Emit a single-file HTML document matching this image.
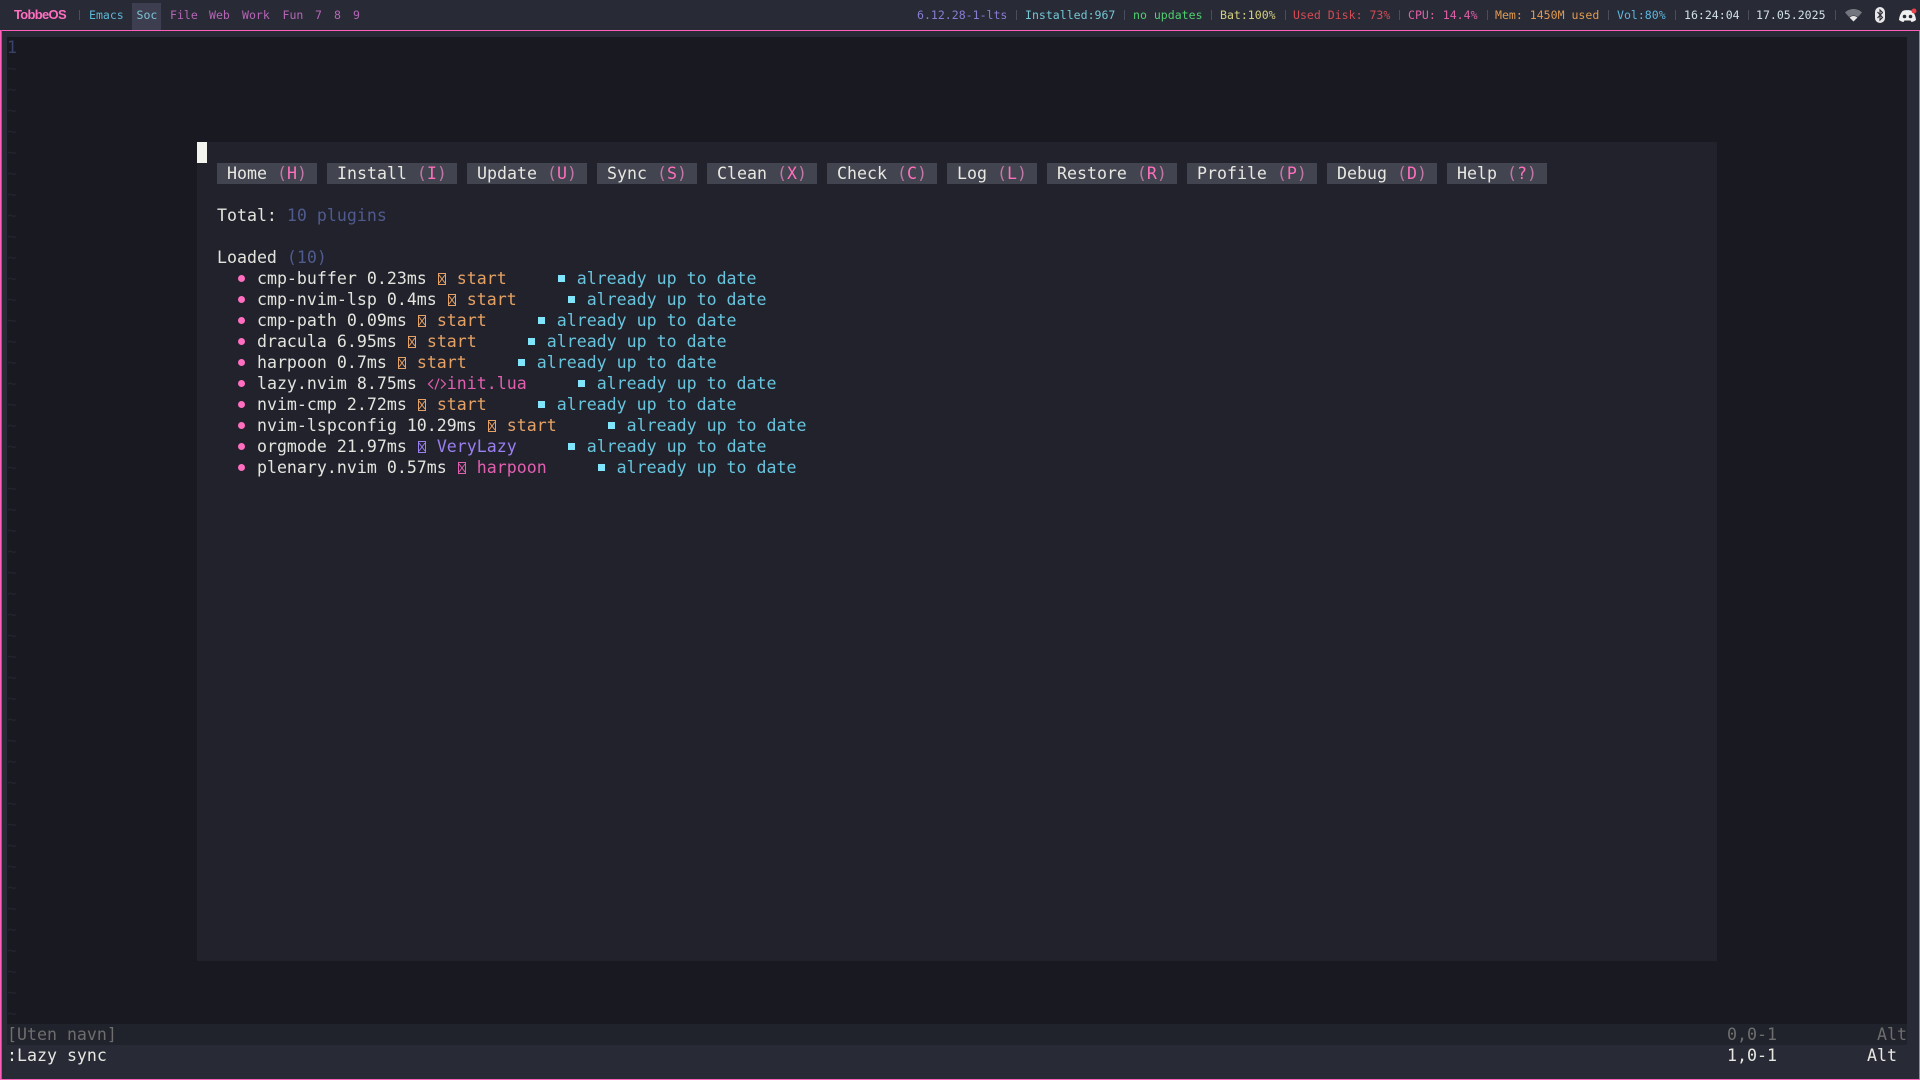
<!DOCTYPE html>
<html lang="no">
<head>
<meta charset="utf-8">
<title>TobbeOS Lazy sync</title>
<style>
html,body{margin:0;padding:0;width:1920px;height:1080px;overflow:hidden;background:#282a36}
*{box-sizing:border-box}
.a{position:absolute}
.bar{font:11.55px/30px "DejaVu Sans Mono","Liberation Mono",monospace;white-space:pre;position:absolute;top:0;height:30px}
.sep{position:absolute;top:10px;width:1px;height:10px;background:#4a4d5c}
.r{position:absolute;left:197px;height:21px;font:16.6px/21px "DejaVu Sans Mono","Liberation Mono",monospace;white-space:pre;color:#e4e4de}
.abs{position:absolute;height:21px;font:16.6px/21px "DejaVu Sans Mono","Liberation Mono",monospace;white-space:pre}
.tab{position:absolute;top:163px;height:21px;background:#42444f;font:16.6px/21px "DejaVu Sans Mono","Liberation Mono",monospace;white-space:pre;color:#e8e8e2}
.tab i{font-style:normal;color:#c077a8}
.tab b{font-weight:normal;color:#ff6fbd}
.d{display:inline-block;width:10px;height:21px;position:relative;vertical-align:top}
.d::after{content:"";position:absolute;left:1.5px;top:7px;width:7px;height:7px;border-radius:50%;background:#ff6ec0}
.s{display:inline-block;width:10px;height:21px;position:relative;vertical-align:top}
.s::after{content:"";position:absolute;left:1px;top:7px;width:7px;height:7px;background:#80e4fb}
.t{display:inline-block;width:10px;height:21px;vertical-align:top}
.t svg{display:block}
.o{color:#e6a264}.c{color:#68c4dc}.p{color:#e25fb0}.v{color:#9a7ff0}
</style>
</head>
<body>
<!-- top bar -->
<div class="a" style="left:0;top:0;width:1920px;height:30px;background:#282a36"></div>
<div class="a" style="left:132px;top:3px;width:29px;height:27px;background:#3d3f50"></div>
<div class="bar" style="left:14px;font:bold 13px/30px 'Liberation Sans',sans-serif;letter-spacing:-.7px;color:#ff6ec0">TobbeOS</div>
<div class="sep" style="left:79px"></div>
<div class="bar" style="left:89px;color:#5cb6d6">Emacs</div>
<div class="bar" style="left:136.500px;color:#7cc4d8">Soc</div>
<div class="bar" style="left:170px;color:#b666b6">File</div>
<div class="bar" style="left:209px;color:#b666b6">Web</div>
<div class="bar" style="left:242px;color:#b666b6">Work</div>
<div class="bar" style="left:282.500px;color:#b666b6">Fun</div>
<div class="bar" style="left:315px;color:#b666b6">7</div>
<div class="bar" style="left:334px;color:#b666b6">8</div>
<div class="bar" style="left:353px;color:#b666b6">9</div>

<div class="bar" style="left:917px;color:#8a7cd2">6.12.28-1-lts</div><div class="sep" style="left:1016px"></div>
<div class="bar" style="left:1025px;color:#74c6d4">Installed:967</div><div class="sep" style="left:1124px"></div>
<div class="bar" style="left:1133px;color:#50d070">no updates</div><div class="sep" style="left:1211px"></div>
<div class="bar" style="left:1220px;color:#d4cf80">Bat:100%</div><div class="sep" style="left:1285px"></div>
<div class="bar" style="left:1293px;color:#d24c54">Used Disk: 73%</div><div class="sep" style="left:1399px"></div>
<div class="bar" style="left:1408px;color:#e060a8">CPU: 14.4%</div><div class="sep" style="left:1487px"></div>
<div class="bar" style="left:1495px;color:#e09a50">Mem: 1450M used</div><div class="sep" style="left:1608px"></div>
<div class="bar" style="left:1617px;color:#5cb8e0">Vol:80%</div><div class="sep" style="left:1675px"></div>
<div class="bar" style="left:1684px;color:#d0e0e8">16:24:04</div><div class="sep" style="left:1748px"></div>
<div class="bar" style="left:1756px;color:#d0e0e8">17.05.2025</div><div class="sep" style="left:1835px"></div>

<svg class="a" style="left:1845px;top:8px" width="17" height="14" viewBox="0 0 17 14"><path d="M0 4.500C2.500 2 5.500 1 8.500 1s6 1 8.500 3.500L13 9c-1.400-1-2.900-1.500-4.500-1.500S5.400 8 4 9z" fill="#73757f"/><path d="M4.500 9.500C5.700 8.600 7 8 8.500 8s2.800.6 4 1.500L8.500 13.500z" fill="#e6e6e6"/></svg>
<svg class="a" style="left:1875px;top:7px" width="10" height="16" viewBox="0 0 10 16"><rect x="0" y="0" width="10" height="16" rx="5" fill="#e8e8e8"/><path d="M2.500 5l5 5.500L5 13V3l2.500 2.500-5 5.500" fill="none" stroke="#282a36" stroke-width="1.100"/></svg>
<svg class="a" style="left:1898px;top:8px" width="20" height="15" viewBox="0 0 20 15"><path d="M4.500 3C7.500 1.800 11.500 1.800 14.500 3C16.500 5.500 17.800 8.500 18 12C16.500 13.200 15 13.800 13.500 14L12.500 12.500H6.500L5.500 14C4 13.800 2.500 13.200 1 12C1.200 8.500 2.500 5.500 4.500 3Z" fill="#f0f0f0"/><circle cx="6.500" cy="8.500" r="1.800" fill="#282a36"/><circle cx="12.500" cy="8.500" r="1.800" fill="#282a36"/><circle cx="16" cy="3" r="2.500" fill="#e8414a"/></svg>

<!-- window border -->
<div class="a" style="left:0;top:30px;width:1920px;height:1px;background:#ff5fb8"></div>
<div class="a" style="left:0;top:30px;width:1px;height:1050px;background:#ff5fb8"></div>
<div class="a" style="left:1px;top:30px;width:1px;height:1050px;background:#b94c8e"></div>
<div class="a" style="left:1919px;top:30px;width:1px;height:1050px;background:#e45cab"></div>
<div class="a" style="left:0;top:1079px;width:1920px;height:1px;background:#ff5fb8"></div>

<!-- terminal -->
<div class="a" style="left:7px;top:37px;width:1900px;height:987px;background:#191a21"></div>
<div class="abs" style="left:7px;top:37px;color:#39426a">1</div>
<div class="a" style="left:7px;top:58px;font:16.6px/21px 'DejaVu Sans Mono',monospace;white-space:pre;color:#23252e">~
~
~
~
~
~
~
~
~
~
~
~
~
~
~
~
~
~
~
~
~
~
~
~
~
~
~
~
~
~
~
~
~
~
~
~
~
~
~
~
~
~
~
~
~
~</div>

<!-- float -->
<div class="a" style="left:197px;top:142px;width:1520px;height:819px;background:#21222c"></div>
<div class="a" style="left:197px;top:142px;width:10px;height:21px;background:#f4f4ee"></div>

<div class="tab" style="left:217px;width:100px"> Home <i>(</i><b>H</b><i>)</i> </div>
<div class="tab" style="left:327px;width:130px"> Install <i>(</i><b>I</b><i>)</i> </div>
<div class="tab" style="left:467px;width:120px"> Update <i>(</i><b>U</b><i>)</i> </div>
<div class="tab" style="left:597px;width:100px"> Sync <i>(</i><b>S</b><i>)</i> </div>
<div class="tab" style="left:707px;width:110px"> Clean <i>(</i><b>X</b><i>)</i> </div>
<div class="tab" style="left:827px;width:110px"> Check <i>(</i><b>C</b><i>)</i> </div>
<div class="tab" style="left:947px;width:90px"> Log <i>(</i><b>L</b><i>)</i> </div>
<div class="tab" style="left:1047px;width:130px"> Restore <i>(</i><b>R</b><i>)</i> </div>
<div class="tab" style="left:1187px;width:130px"> Profile <i>(</i><b>P</b><i>)</i> </div>
<div class="tab" style="left:1327px;width:110px"> Debug <i>(</i><b>D</b><i>)</i> </div>
<div class="tab" style="left:1447px;width:100px"> Help <i>(</i><b>?</b><i>)</i> </div>

<div class="r" style="top:205px">  Total: <span style="color:#4f5b8e">10 plugins</span></div>
<div class="r" style="top:247px">  Loaded <span style="color:#4f5b8e">(10)</span></div>

<div class="r" style="top:268px">    <span class="d"></span> cmp-buffer 0.23ms <span class="t o"><svg width="10" height="21" viewBox="0 0 10 21" fill="none" stroke="currentColor"><rect x="1.500" y="5.500" width="7" height="11"/><path d="M2 7l6 8M8 7l-6 8"/></svg></span> <span class="o">start</span>     <span class="s"></span> <span class="c">already up to date</span></div>
<div class="r" style="top:289px">    <span class="d"></span> cmp-nvim-lsp 0.4ms <span class="t o"><svg width="10" height="21" viewBox="0 0 10 21" fill="none" stroke="currentColor"><rect x="1.500" y="5.500" width="7" height="11"/><path d="M2 7l6 8M8 7l-6 8"/></svg></span> <span class="o">start</span>     <span class="s"></span> <span class="c">already up to date</span></div>
<div class="r" style="top:310px">    <span class="d"></span> cmp-path 0.09ms <span class="t o"><svg width="10" height="21" viewBox="0 0 10 21" fill="none" stroke="currentColor"><rect x="1.500" y="5.500" width="7" height="11"/><path d="M2 7l6 8M8 7l-6 8"/></svg></span> <span class="o">start</span>     <span class="s"></span> <span class="c">already up to date</span></div>
<div class="r" style="top:331px">    <span class="d"></span> dracula 6.95ms <span class="t o"><svg width="10" height="21" viewBox="0 0 10 21" fill="none" stroke="currentColor"><rect x="1.500" y="5.500" width="7" height="11"/><path d="M2 7l6 8M8 7l-6 8"/></svg></span> <span class="o">start</span>     <span class="s"></span> <span class="c">already up to date</span></div>
<div class="r" style="top:352px">    <span class="d"></span> harpoon 0.7ms <span class="t o"><svg width="10" height="21" viewBox="0 0 10 21" fill="none" stroke="currentColor"><rect x="1.500" y="5.500" width="7" height="11"/><path d="M2 7l6 8M8 7l-6 8"/></svg></span> <span class="o">start</span>     <span class="s"></span> <span class="c">already up to date</span></div>
<div class="r" style="top:373px">    <span class="d"></span> lazy.nvim 8.75ms <span class="t p"><svg width="20" height="21" viewBox="0 0 20 21" fill="none" stroke="currentColor" stroke-width="1.200"><path d="M6 6.500L1.500 11 6 15.500M14 6.500L18.500 11 14 15.500M12 5.500L8 16.500"/></svg></span> <span class="p">init.lua</span>     <span class="s"></span> <span class="c">already up to date</span></div>
<div class="r" style="top:394px">    <span class="d"></span> nvim-cmp 2.72ms <span class="t o"><svg width="10" height="21" viewBox="0 0 10 21" fill="none" stroke="currentColor"><rect x="1.500" y="5.500" width="7" height="11"/><path d="M2 7l6 8M8 7l-6 8"/></svg></span> <span class="o">start</span>     <span class="s"></span> <span class="c">already up to date</span></div>
<div class="r" style="top:415px">    <span class="d"></span> nvim-lspconfig 10.29ms <span class="t o"><svg width="10" height="21" viewBox="0 0 10 21" fill="none" stroke="currentColor"><rect x="1.500" y="5.500" width="7" height="11"/><path d="M2 7l6 8M8 7l-6 8"/></svg></span> <span class="o">start</span>     <span class="s"></span> <span class="c">already up to date</span></div>
<div class="r" style="top:436px">    <span class="d"></span> orgmode 21.97ms <span class="t v"><svg width="10" height="21" viewBox="0 0 10 21" fill="none" stroke="currentColor"><rect x="1.500" y="5.500" width="7" height="11"/><path d="M2 7l6 8M8 7l-6 8"/></svg></span> <span class="v">VeryLazy</span>     <span class="s"></span> <span class="c">already up to date</span></div>
<div class="r" style="top:457px">    <span class="d"></span> plenary.nvim 0.57ms <span class="t p"><svg width="10" height="21" viewBox="0 0 10 21" fill="none" stroke="currentColor"><rect x="1.500" y="5.500" width="7" height="11"/><path d="M2 7l6 8M8 7l-6 8"/></svg></span> <span class="p">harpoon</span>     <span class="s"></span> <span class="c">already up to date</span></div>

<!-- status rows -->
<div class="a" style="left:7px;top:1024px;width:1900px;height:21px;background:#21232c"></div>
<div class="abs" style="left:7px;top:1024px;color:#6d6d6d">[Uten navn]</div>
<div class="abs" style="left:1727px;top:1024px;color:#6d6d6d">0,0-1</div>
<div class="abs" style="left:1877px;top:1024px;color:#6d6d6d">Alt</div>
<div class="abs" style="left:7px;top:1045px;color:#e8e8e2">:Lazy sync</div>
<div class="abs" style="left:1727px;top:1045px;color:#e8e8e2">1,0-1</div>
<div class="abs" style="left:1867px;top:1045px;color:#e8e8e2">Alt</div>
</body>
</html>
